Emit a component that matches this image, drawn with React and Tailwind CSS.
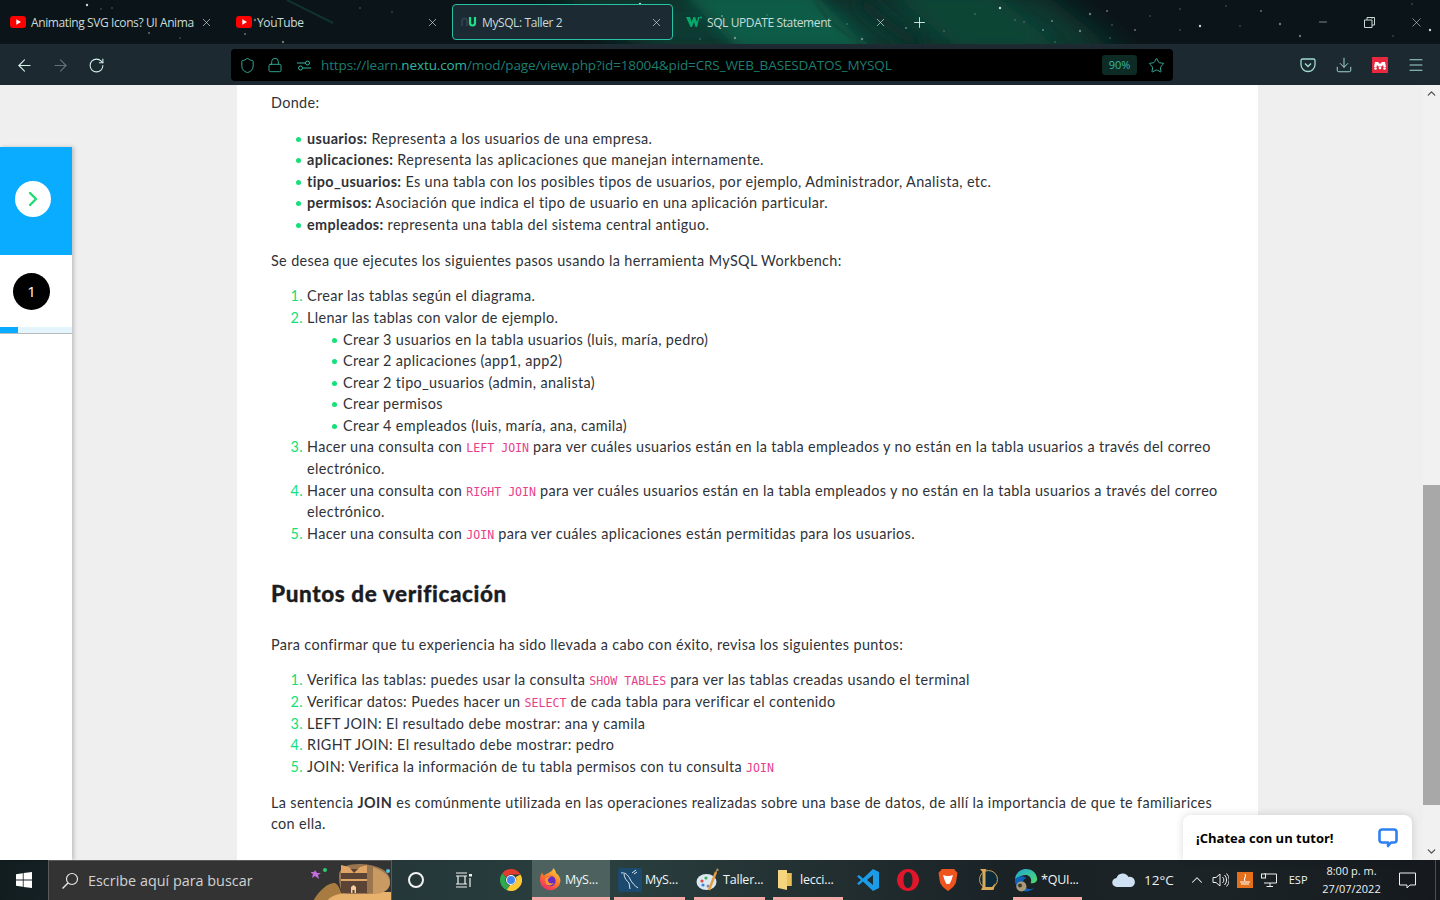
import React from "react";
import {
  ArrowLeft,
  ArrowRight,
  RotateCw,
  Shield,
  Lock,
  Star,
  Menu,
  Download,
  X,
  Plus,
  Minus,
  ChevronUp,
  ChevronDown,
  ChevronRight,
} from "lucide-react";

const stars = [
  [87, 5], [101, 9], [112, 8], [149, 33], [255, 20], [262, 24], [272, 17], [180, 38], [283, 42], [245, 34],
  [360, 8], [392, 12], [640, 4], [660, 30], [700, 39], [722, 16], [735, 38], [767, 15], [812, 23], [847, 24],
  [862, 39], [906, 28], [944, 31], [975, 14], [1000, 8], [1015, 20], [1024, 22], [1052, 21], [1080, 31], [1110, 38],
  [1043, 30], [1055, 42], [1090, 14], [1107, 11], [1150, 16], [1180, 9], [1200, 26], [1226, 6], [1240, 26], [1261, 11],
  [1280, 24], [1112, 25], [1135, 30], [1180, 30], [1300, 36], [1372, 18], [1393, 36], [1412, 4], [1430, 30],
];

function Wallpaper() {
  return (
    <svg className="absolute inset-0" width="1440" height="85" viewBox="0 0 1440 85">
      <defs>
        <filter id="soft" x="-20%" y="-50%" width="140%" height="200%">
          <feGaussianBlur stdDeviation="7" />
        </filter>
        <filter id="softer" x="-20%" y="-50%" width="140%" height="200%">
          <feGaussianBlur stdDeviation="14" />
        </filter>
      </defs>
      <rect width="1440" height="85" fill="#0b1519" />
      <path d="M540 -10 L1040 -10 L1130 60 L660 60 Z" fill="#0c3a31" filter="url(#softer)" />
      <path d="M680 -10 L810 -10 L870 50 L740 50 Z" fill="#0e5c46" filter="url(#soft)" />
      <path d="M890 -10 L990 -10 L1060 50 L960 50 Z" fill="#0d4536" filter="url(#soft)" />
      <path d="M815 0 C825 20 845 36 866 44" fill="none" stroke="#0f4d3c" strokeWidth="3" />
      <path d="M860 0 C880 20 900 34 920 44" fill="none" stroke="#0a2a26" strokeWidth="10" filter="url(#soft)" />
      <path d="M287 0 L333 23" stroke="#10332c" strokeWidth="2" />
      {stars.map(([x, y], i) => (
        <circle key={i} cx={x} cy={y} r={i % 4 === 0 ? 1.2 : 0.7} fill="#dfeee9" opacity={i % 3 === 0 ? 0.9 : 0.45} />
      ))}
    </svg>
  );
}

function YoutubeIcon() {
  return (
    <svg width="16" height="16" viewBox="0 0 16 16" className="shrink-0">
      <rect x="0" y="2" width="16" height="12" rx="3" fill="#f00" />
      <path d="M6.3 5.2 L11 8 L6.3 10.8 Z" fill="#fff" />
    </svg>
  );
}

function NextuIcon() {
  return (
    <svg width="16" height="12" viewBox="0 0 16 12" className="shrink-0">
      <path d="M1 10 V5 a2.5 2.5 0 0 1 5 0 V10" fill="none" stroke="#2c3f4d" strokeWidth="2" />
      <path d="M9 1 V7 a2.5 2.5 0 0 0 5 0 V1" fill="none" stroke="#1fe08a" strokeWidth="2.2" />
    </svg>
  );
}

function W3Icon() {
  return (
    <svg width="16" height="12" viewBox="0 0 16 12" className="shrink-0">
      <path d="M0 1 H4 L5.5 6 L7.5 1 H9 L11 6 L12 1 H13.5 L11 11 H9.5 L8 6 L6 11 H4.5 Z" fill="#04aa6d" />
      <circle cx="15" cy="1.5" r="1" fill="#04aa6d" />
    </svg>
  );
}

function Tab({ icon, title, active, className, closeClass }) {
  return (
    <div
      className={`relative flex h-9 items-center rounded-[4px] border pl-[8px] ${className} ${
        active ? "border-[#27c2a4] bg-[#1c2a33]" : "border-transparent"
      }`}
    >
      <div className="flex w-4 shrink-0 items-center justify-center">{icon}</div>
      <div className="ml-[5px] min-w-0 flex-1 overflow-hidden whitespace-nowrap pt-px text-[12px] tracking-[-0.4px] text-[#c9dcd8] font-['Open_Sans',sans-serif]">
        {title}
      </div>
      <X size={13} strokeWidth={1.3} className={`shrink-0 text-[#c9dcd8] ${closeClass}`} />
    </div>
  );
}

function TabStrip() {
  return (
    <div className="relative flex h-11 items-center">
      <Tab icon={<YoutubeIcon />} title="Animating SVG Icons? UI Anima" className="ml-px w-[221px]" closeClass="ml-px mr-2" />
      <Tab icon={<YoutubeIcon />} title="YouTube" className="ml-[5px] w-[218px]" closeClass="mr-[5px]" />
      <Tab icon={<NextuIcon />} title="MySQL: Taller 2" active className="ml-[7px] w-[221px]" closeClass="mr-[9px]" />
      <Tab icon={<W3Icon />} title="SQL UPDATE Statement" className="ml-[4px] w-[217px]" closeClass="mr-[6px]" />
      <Plus size={17} strokeWidth={1.3} className="ml-[17px] text-[#dce8e5]" />
      <div className="ml-auto flex items-center text-[#c9d8d5]">
        <Minus size={12} strokeWidth={1.2} className="mr-[35px]" />
        <svg width="11" height="11" viewBox="0 0 11 11" className="mr-[34px]">
          <path d="M0.5 3 H8 V10.5 H0.5 Z M3 3 V0.5 H10.5 V8 H8" fill="none" stroke="#c9d8d5" />
        </svg>
        <X size={15} strokeWidth={1} className="mr-4" />
      </div>
    </div>
  );
}

function PocketIcon() {
  return (
    <svg width="16" height="15" viewBox="0 0 16 15">
      <path d="M1 2.5 a1.5 1.5 0 0 1 1.5 -1.5 h11 a1.5 1.5 0 0 1 1.5 1.5 v4 a7 7 0 0 1 -14 0 Z" fill="none" stroke="#9fdcd0" strokeWidth="1.3" />
      <path d="M5 5.5 L8 8.5 L11 5.5" fill="none" stroke="#9fdcd0" strokeWidth="1.4" />
    </svg>
  );
}

function MendeleyIcon() {
  return (
    <svg width="16" height="16" viewBox="0 0 16 16">
      <rect width="16" height="16" fill="#e6293e" />
      <path d="M3 5 H6 L8 7 L10 5 H13 L14 10 H11.5 L11 8 L9.5 9.5 H6.5 L5 8 L4.5 10 H2 Z" fill="#fff" />
      <circle cx="3.5" cy="11.5" r="1.3" fill="#fff" />
      <circle cx="8" cy="11" r="1.3" fill="#fff" />
      <circle cx="12.5" cy="11.5" r="1.3" fill="#fff" />
    </svg>
  );
}

function Toolbar() {
  return (
    <div className="relative flex h-[41px] items-center border-t border-[#1e2c31] bg-[#1c2930]">
      <ArrowLeft size={19} strokeWidth={1.4} className="ml-[15px] text-[#d2efe8]" />
      <ArrowRight size={19} strokeWidth={1.4} className="ml-[17px] text-[#5f7473]" />
      <RotateCw size={17} strokeWidth={1.5} className="ml-[18px] text-[#d2efe8]" />
      <div className="ml-[126px] flex h-8 w-[942px] items-center rounded-[4px] bg-black">
        <Shield size={17} strokeWidth={1.3} className="ml-2 text-[#35b8a2]" />
        <Lock size={16} strokeWidth={1.3} className="ml-[11px] text-[#35b8a2]" />
        <svg width="14" height="11" viewBox="0 0 14 11" className="ml-[14px]">
          <path d="M0 3 H8 M6 8 H14" stroke="#35b8a2" />
          <circle cx="10.5" cy="3" r="2" fill="none" stroke="#35b8a2" />
          <circle cx="3.5" cy="8" r="2" fill="none" stroke="#35b8a2" />
        </svg>
        <div className="ml-[10px] whitespace-nowrap text-[13.5px] tracking-[-0.11px] text-[#1d7e70] font-['Open_Sans',sans-serif]">
          https://learn.<span className="text-[#33b5a0]">nextu.com</span>/mod/page/view.php?id=18004&pid=CRS_WEB_BASESDATOS_MYSQL
        </div>
        <div className="ml-auto flex h-5 w-[35px] items-center justify-center rounded-[3px] bg-[#0d2a25] text-[11px] text-[#35b8a2] font-['Open_Sans',sans-serif]">
          90%
        </div>
        <Star size={17} strokeWidth={1.3} className="ml-[11px] mr-2 text-[#35b8a2]" />
      </div>
      <div className="ml-auto flex items-center text-[#9fdcd0]">
        <PocketIcon />
        <Download size={18} strokeWidth={1.3} className="ml-[19px]" />
        <div className="ml-[19px]">
          <MendeleyIcon />
        </div>
        <Menu size={18} strokeWidth={1.4} className="ml-[19px] mr-[15px]" />
      </div>
    </div>
  );
}

function Sidebar() {
  return (
    <div className="mt-[62px] flex h-[calc(100%-62px)] w-[72px] flex-col bg-white shadow-[2px_0_4px_rgba(0,0,0,0.2)]">
      <div className="flex h-[108px] items-start bg-[#0aacff] pl-[15px] pt-[34px]">
        <div className="flex h-9 w-9 items-center justify-center rounded-full bg-white">
          <ChevronRight size={24} strokeWidth={2.4} className="text-[#1fdc74]" />
        </div>
      </div>
      <div className="flex h-[72px] items-center pl-[13px]">
        <div className="flex h-[37px] w-[37px] items-center justify-center rounded-full bg-black pt-px text-[15px] text-white font-['Open_Sans',sans-serif]">
          1
        </div>
      </div>
      <div className="h-[7px] border-b border-[#bbbbbb] bg-[#e5f5fe]">
        <div className="h-[6px] w-[18px] bg-[#0aacff]" />
      </div>
    </div>
  );
}

function Code({ children }) {
  return <code className="text-[11.6px] leading-none tracking-normal text-[#e83e8c] font-['DejaVu_Sans_Mono',monospace]">{children}</code>;
}

function Bullet({ children }) {
  return (
    <li className="relative before:absolute before:left-[-11px] before:top-[9px] before:h-[5px] before:w-[5px] before:rounded-full before:bg-[#14e07a]">
      {children}
    </li>
  );
}

function Article() {
  const p = "mb-[14.4px]";
  const ul = "mb-[14.4px] list-none pl-9";
  const ol = "mb-[14.4px] list-decimal pl-9 marker:text-[#14e07a]";
  return (
    <div className="h-full w-[1021px] overflow-hidden bg-white pl-[34px] pr-[30px] pt-[6.7px] text-[14.4px] leading-[21.6px] tracking-[0.36px] text-[#2f3238] font-['Lato',sans-serif]">
      <p className={p}>Donde:</p>
      <ul className={ul}>
        <Bullet><b>usuarios:</b> Representa a los usuarios de una empresa.</Bullet>
        <Bullet><b>aplicaciones:</b> Representa las aplicaciones que manejan internamente.</Bullet>
        <Bullet><b>tipo_usuarios:</b> Es una tabla con los posibles tipos de usuarios, por ejemplo, Administrador, Analista, etc.</Bullet>
        <Bullet><b>permisos:</b> Asociación que indica el tipo de usuario en una aplicación particular.</Bullet>
        <Bullet><b>empleados:</b> representa una tabla del sistema central antiguo.</Bullet>
      </ul>
      <p className="mb-[13.7px]">Se desea que ejecutes los siguientes pasos usando la herramienta MySQL Workbench:</p>
      <ol className={ol}>
        <li>Crear las tablas según el diagrama.</li>
        <li>
          Llenar las tablas con valor de ejemplo.
          <ul className="list-none pl-9">
            <Bullet>Crear 3 usuarios en la tabla usuarios (luis, maría, pedro)</Bullet>
            <Bullet>Crear 2 aplicaciones (app1, app2)</Bullet>
            <Bullet>Crear 2 tipo_usuarios (admin, analista)</Bullet>
            <Bullet>Crear permisos</Bullet>
            <Bullet>Crear 4 empleados (luis, maría, ana, camila)</Bullet>
          </ul>
        </li>
        <li>Hacer una consulta con <Code>LEFT JOIN</Code> para ver cuáles usuarios están en la tabla empleados y no están en la tabla usuarios a través del correo electrónico.</li>
        <li>Hacer una consulta con <Code>RIGHT JOIN</Code> para ver cuáles usuarios están en la tabla empleados y no están en la tabla usuarios a través del correo electrónico.</li>
        <li>Hacer una consulta con <Code>JOIN</Code> para ver cuáles aplicaciones están permitidas para los usuarios.</li>
      </ol>
      <h2 className="mb-[27.4px] mt-[36.5px] text-[22.5px] font-black leading-[26px] tracking-[0.6px] text-[#1b1d22] [-webkit-text-stroke:0.3px_#1b1d22]">Puntos de verificación</h2>
      <p className="mb-[13.4px]">Para confirmar que tu experiencia ha sido llevada a cabo con éxito, revisa los siguientes puntos:</p>
      <ol className={ol}>
        <li>Verifica las tablas: puedes usar la consulta <Code>SHOW TABLES</Code> para ver las tablas creadas usando el terminal</li>
        <li>Verificar datos: Puedes hacer un <Code>SELECT</Code> de cada tabla para verificar el contenido</li>
        <li>LEFT JOIN: El resultado debe mostrar: ana y camila</li>
        <li>RIGHT JOIN: El resultado debe mostrar: pedro</li>
        <li>JOIN: Verifica la información de tu tabla permisos con tu consulta <Code>JOIN</Code></li>
      </ol>
      <p className={p}>La sentencia <b>JOIN</b> es comúnmente utilizada en las operaciones realizadas sobre una base de datos, de allí la importancia de que te familiarices con ella.</p>
    </div>
  );
}

function Scrollbar() {
  return (
    <div className="flex h-full w-[17px] flex-col items-center bg-[#f1f1f1]">
      <ChevronUp size={13} strokeWidth={2.4} className="mt-[2px] text-[#505050]" />
      <div className="mt-[385px] h-[320px] w-full bg-[#a8a8a8]" />
      <ChevronDown size={13} strokeWidth={2.4} className="mt-10 text-[#505050]" />
    </div>
  );
}

function ChatWidget() {
  return (
    <div className="absolute bottom-0 left-[1183px] flex h-[45px] w-[229px] items-center justify-between rounded-t-[8px] bg-white pl-[13px] pr-[14px] shadow-[0_0_8px_rgba(0,0,0,0.15)]">
      <span className="pt-[2px] text-[13px] font-bold text-black font-['Open_Sans',sans-serif]">¡Chatea con un tutor!</span>
      <svg width="20" height="20" viewBox="0 0 20 20">
        <path d="M4 1.5 H16 a2.5 2.5 0 0 1 2.5 2.5 V12 a2.5 2.5 0 0 1 -2.5 2.5 H13 L10 18 V14.5 H4 A2.5 2.5 0 0 1 1.5 12 V4 A2.5 2.5 0 0 1 4 1.5 Z" fill="none" stroke="#2f80f0" strokeWidth="2.6" strokeLinejoin="round" />
      </svg>
    </div>
  );
}

function WindowsLogo() {
  return (
    <svg width="16" height="16" viewBox="0 0 16 16">
      <path d="M0 2.2 L6.8 1.2 V7.6 H0 Z M7.6 1.1 L16 0 V7.6 H7.6 Z M0 8.4 H6.8 V14.8 L0 13.8 Z M7.6 8.4 H16 V16 L7.6 14.9 Z" fill="#fff" />
    </svg>
  );
}

function SearchArt() {
  return (
    <svg width="80" height="40" viewBox="0 0 80 40" className="absolute right-0 top-0">
      <path d="M2 40 C8 30 16 22 24 22 C28 24 30 30 32 40 Z" fill="#a87c40" />
      <path d="M16 40 C22 32 34 30 80 31 V40 Z" fill="#e8b26d" />
      <path d="M28 14 C28 6 38 3 48 3 C62 3 79 8 79 20 C79 30 66 33 54 33 H36 C30 33 28 26 28 14 Z" fill="#9a7650" />
      <path d="M62 6 C72 10 79 14 79 22 C79 30 70 33 62 33 Z" fill="#c99a62" />
      <path d="M30 8 H56 V32 H30 Z" fill="#5b4335" />
      <path d="M30 4 L38 6 L43 12 L49 6 L56 4 V12 H30 Z" fill="#e0a565" />
      <rect x="30" y="18" width="26" height="2" fill="#e0a565" />
      <path d="M40 32 V26 L42.5 24 L45 26 V32 H43.5 V29 H41.5 V32 Z" fill="#f2cf9b" />
      <path d="M4 9 L6 12 L10 12 L7 14 L8 18 L4 15 L1 17 L2 13 L-1 11 L3 11 Z" fill="#c66be0" />
      <circle cx="14" cy="9" r="2" fill="#2ecc71" />
      <circle cx="77" cy="10" r="2" fill="#4fc3d9" />
    </svg>
  );
}

function ChromeIcon() {
  return (
    <svg width="22" height="22" viewBox="0 0 22 22">
      <path d="M11 0 A11 11 0 0 1 20.5 5.5 H11 A5.5 5.5 0 0 0 6.2 8.2 L2.2 4.4 A11 11 0 0 1 11 0 Z" fill="#e33b2e" />
      <path d="M2.2 4.4 L6.2 8.2 A5.5 5.5 0 0 0 9.2 16.2 L6.5 21 A11 11 0 0 1 2.2 4.4 Z" fill="#2da94f" />
      <path d="M20.5 5.5 A11 11 0 0 1 6.5 21 L10 16 A5.5 5.5 0 0 0 15.6 8 Z" fill="#fcc934" />
      <circle cx="11" cy="11" r="5" fill="#fff" />
      <circle cx="11" cy="11" r="4" fill="#4285f4" />
    </svg>
  );
}

function FirefoxIcon() {
  return (
    <svg width="24" height="24" viewBox="0 0 24 24">
      <defs>
        <linearGradient id="ff" x1="0.8" y1="0" x2="0.2" y2="1">
          <stop offset="0" stopColor="#ffd23a" />
          <stop offset="0.5" stopColor="#ff7a2a" />
          <stop offset="1" stopColor="#f0246a" />
        </linearGradient>
      </defs>
      <path d="M2 12 C2 8 3 6 4.5 4.5 C4.5 6 5 7 6 7.5 C8 5.5 11 5 12 4 C14 3 15 1.5 15.5 0 C17 2 18 3.5 18 5 C20.5 7 22.5 9.5 22.5 13 A10.3 10.3 0 0 1 2 13 Z" fill="url(#ff)" />
      <circle cx="12.5" cy="13" r="5.2" fill="#6a2bc4" />
      <path d="M7 11 C9 8 12 8 14 8.5 C11 9 9.5 11 10 13 C10.5 15 13 16 16 15 C14 18 9 18.5 7.5 15 Z" fill="#ff9a2a" />
    </svg>
  );
}

function WorkbenchIcon() {
  return (
    <svg width="24" height="24" viewBox="0 0 24 24">
      <rect width="24" height="24" rx="2" fill="#1c4a6e" />
      <path d="M3 5 C7 4 10 7 12 11 C14 15 17 18 20 20 M6 6 C6 10 9 13 11 15 L12 21 M14 5 L18 2 M16 6 L19 4" fill="none" stroke="#d5e4ee" strokeWidth="1" />
    </svg>
  );
}

function PaletteIcon() {
  return (
    <svg width="24" height="24" viewBox="0 0 24 24">
      <ellipse cx="10.5" cy="14" rx="10" ry="8" fill="#d9e8f2" />
      <circle cx="6" cy="13" r="1.6" fill="#e04b3f" />
      <circle cx="10" cy="10" r="1.6" fill="#3fae5a" />
      <circle cx="7" cy="17" r="1.6" fill="#3f86d8" />
      <circle cx="12" cy="18" r="1.5" fill="#8a8a8a" />
      <path d="M13 22 L20 4" stroke="#e89a3c" strokeWidth="2.4" />
      <path d="M19 5 L21 0 L23 2 Z" fill="#b58a5a" />
    </svg>
  );
}

function FolderIcon() {
  return (
    <svg width="16" height="22" viewBox="0 0 16 22">
      <path d="M1 1 H10 V4 H14.5 V17 H10 V21 L1 19 Z" fill="#f5d67e" />
      <path d="M10 4 H14.5 V17 H10 Z" fill="#e8c05a" />
    </svg>
  );
}

function VscodeIcon() {
  return (
    <svg width="24" height="24" viewBox="0 0 24 24">
      <path d="M17 1 L23 4 V20 L17 23 L7 13.5 L3 17 L1 15.5 L5 12 L1 8.5 L3 7 L7 10.5 Z M17 7 L11 12 L17 17 Z" fill="#1a9ce8" fillRule="evenodd" />
    </svg>
  );
}

function OperaIcon() {
  return (
    <svg width="22" height="22" viewBox="0 0 22 22">
      <path d="M11 0 A11 11 0 1 0 11 22 A11 11 0 1 0 11 0 Z M11 3 C14 3 15.5 6.5 15.5 11 C15.5 15.5 14 19 11 19 C8 19 6.5 15.5 6.5 11 C6.5 6.5 8 3 11 3 Z" fill="#e0162b" fillRule="evenodd" />
    </svg>
  );
}

function BraveIcon() {
  return (
    <svg width="20" height="24" viewBox="0 0 20 24">
      <path d="M4 1 H16 L19.5 5 L18 14 C17 18 13 21 10 23 C7 21 3 18 2 14 L0.5 5 Z" fill="#f0541e" />
      <path d="M5 7 L8.5 8 H11.5 L15 7 L13.5 12 L11.5 16 H8.5 L6.5 12 Z" fill="#fff" />
      <path d="M8.5 16 H11.5 L10 18 Z" fill="#f0541e" />
    </svg>
  );
}

function LeagueIcon() {
  return (
    <svg width="20" height="24" viewBox="0 0 20 24">
      <circle cx="10.5" cy="11.5" r="9" fill="#0c2a3a" stroke="#c6a15a" strokeWidth="1" />
      <path d="M2 1 H8.5 L7.5 3 V19 H14 L17.5 15 L15.5 22 H3 L4.5 19 V4 Z" fill="#d9a95a" />
    </svg>
  );
}

function EdgeIcon() {
  return (
    <svg width="26" height="26" viewBox="0 0 26 26">
      <defs>
        <linearGradient id="edge" x1="0" y1="0" x2="1" y2="1">
          <stop offset="0" stopColor="#1fa6d8" />
          <stop offset="1" stopColor="#4fdc6a" />
        </linearGradient>
      </defs>
      <path d="M1 12 C2 5 7 1 13 1 C20 1 25 6 25 12 C25 16 21 17 18 16.5 C20 12 17 7 12 7.5 C7 8 4 11 1 12 Z" fill="url(#edge)" />
      <path d="M1 12 C5 8 11 8 13 11 C10 12 9 15 10.5 19 C12 23 18 24 22 21 C19 25 14 26 10 25 C4 23 0.5 18 1 12 Z" fill="#0f62b8" />
      <circle cx="8" cy="20" r="5.5" fill="#a99a78" />
      <circle cx="6.5" cy="19" r="2.2" fill="#3f3a2c" />
    </svg>
  );
}

function TaskApp({ icon, label, className, active }) {
  return (
    <div
      className={`flex h-10 items-center border-b-[3px] border-[#f5a9a9] pt-[3px] ${className} ${active ? "bg-[#4d615e]" : ""}`}
    >
      <div className="flex w-[24px] shrink-0 items-center justify-center">{icon}</div>
      <span className="ml-[3px] whitespace-nowrap pt-px text-[12.5px] tracking-[-0.2px] text-[#f2f5f5] font-['Open_Sans',sans-serif]">{label}</span>
    </div>
  );
}

function Taskbar() {
  return (
    <div className="flex h-10 items-center bg-[linear-gradient(90deg,#121d20_0%,#233436_22%,#2a3f3f_42%,#233032_56%,#1a2226_70%,#1b2327_85%,#15191d_100%)]">
      <div className="flex w-12 shrink-0 justify-center">
        <WindowsLogo />
      </div>
      <div className="relative flex h-10 w-[344px] shrink-0 items-center border border-b-0 border-[#5a5a5a] bg-[#333333]">
        <svg width="18" height="18" viewBox="0 0 18 18" className="ml-[12px]">
          <circle cx="11" cy="7" r="5.5" fill="none" stroke="#e8e8e8" strokeWidth="1.2" />
          <path d="M7 11 L1.5 16.5" stroke="#e8e8e8" strokeWidth="1.4" />
        </svg>
        <span className="ml-[9px] text-[14.4px] text-[#d0d2d2] font-['Open_Sans',sans-serif]">Escribe aquí para buscar</span>
        <SearchArt />
      </div>
      <div className="ml-[16px] h-4 w-4 shrink-0 rounded-full border-2 border-[#f2f2f2]" />
      <svg width="18" height="16" viewBox="0 0 18 16" className="ml-[31px] shrink-0">
        <path d="M1 1 H12 M1 15 H12 M3 4 V12 M10 4 V12 M1 12 H12 M1 4 H12 M15 6 V15" fill="none" stroke="#f2f2f2" strokeWidth="1.2" />
        <rect x="14" y="2" width="3" height="2.5" fill="#f2f2f2" />
      </svg>
      <div className="ml-[27px] shrink-0">
        <ChromeIcon />
      </div>
      <TaskApp active icon={<FirefoxIcon />} label="MyS..." className="ml-[10px] w-[78px] pl-[6px]" />
      <TaskApp icon={<WorkbenchIcon />} label="MyS..." className="ml-[4px] w-[71px] pl-[4px]" />
      <TaskApp icon={<PaletteIcon />} label="Taller..." className="ml-[9px] w-[71px] pl-[2px]" />
      <TaskApp icon={<FolderIcon />} label="lecci..." className="ml-[8px] w-[70px] pl-0" />
      <div className="ml-[13px] shrink-0"><VscodeIcon /></div>
      <div className="ml-[17px] shrink-0"><OperaIcon /></div>
      <div className="ml-[19px] shrink-0"><BraveIcon /></div>
      <div className="ml-[20px] shrink-0"><LeagueIcon /></div>
      <TaskApp icon={<EdgeIcon />} label="*QUI..." className="ml-[15px] w-[69px] pl-px" />
      <svg width="24" height="16" viewBox="0 0 24 16" className="ml-[30px] shrink-0">
        <path d="M5 15 A4.5 4.5 0 0 1 4.5 6 A6.5 6.5 0 0 1 16.5 5 A5 5 0 0 1 19 15 Z" fill="#cfe0f2" />
      </svg>
      <span className="ml-[8px] shrink-0 text-[13.5px] text-[#eef1f1] font-['Open_Sans',sans-serif]">12°C</span>
      <ChevronUp size={18} strokeWidth={1.4} className="ml-[14px] shrink-0 text-[#f0f0f0]" />
      <svg width="17" height="16" viewBox="0 0 17 16" className="ml-[6px] shrink-0">
        <path d="M1 5.5 H4 L8 2 V14 L4 10.5 H1 Z M10.5 5 A4 4 0 0 1 10.5 11 M12.5 3 A7 7 0 0 1 12.5 13 M14.5 1.5 A9 9 0 0 1 14.5 14.5" fill="none" stroke="#eeeeee" />
      </svg>
      <div className="ml-[8px] flex h-[16px] w-[16px] shrink-0 items-center justify-center bg-[#e5701c]">
        <svg width="12" height="12" viewBox="0 0 12 12">
          <path d="M6 0 C8 3 4 4 6 7 M1 8 H11 M2 10 H10" fill="none" stroke="#fff" strokeWidth="1.1" />
        </svg>
      </div>
      <svg width="16" height="14" viewBox="0 0 16 14" className="ml-[8px] shrink-0">
        <path d="M3 1 H15.5 V10 H3 M9 10 V13 M5.5 13.5 H12" fill="none" stroke="#eeeeee" />
        <rect x="0.5" y="1" width="4" height="4" fill="#1b2327" stroke="#eeeeee" />
      </svg>
      <span className="ml-[12px] shrink-0 text-[11px] text-[#eef1f1] font-['Open_Sans',sans-serif]">ESP</span>
      <div className="ml-[13px] flex w-[62px] shrink-0 flex-col items-center text-[11px] leading-[18px] text-[#eef1f1] font-['Open_Sans',sans-serif]">
        <span>8:00 p. m.</span>
        <span className="whitespace-nowrap">27/07/2022</span>
      </div>
      <svg width="17" height="17" viewBox="0 0 17 17" className="ml-[16px] shrink-0">
        <path d="M0.5 1 H16.5 V13 H11 L8 16 V13 H0.5 Z" fill="none" stroke="#f0f0f0" />
      </svg>
      <div className="ml-[19px] h-10 w-px shrink-0 bg-[#4a5054]" />
    </div>
  );
}

export default function App() {
  return (
    <div className="flex h-[900px] w-[1440px] flex-col overflow-hidden bg-[#efefef]">
      <div className="relative h-[85px] shrink-0">
        <Wallpaper />
        <TabStrip />
        <Toolbar />
      </div>
      <div className="relative flex min-h-0 flex-1">
        <div className="h-full w-[237px] shrink-0">
          <Sidebar />
        </div>
        <Article />
        <div className="flex-1" />
        <Scrollbar />
        <ChatWidget />
      </div>
      <Taskbar />
    </div>
  );
}
